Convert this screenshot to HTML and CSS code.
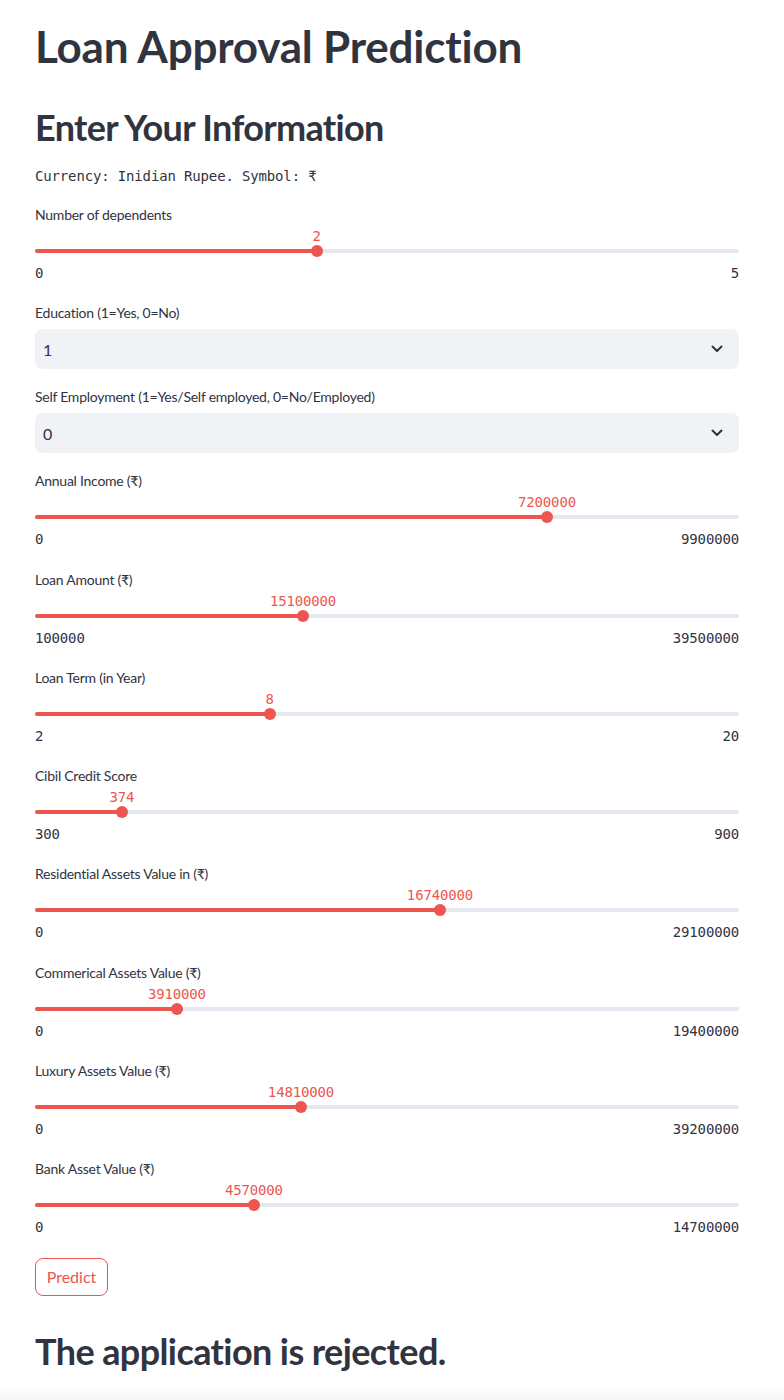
FILE: index.html
```html
<!DOCTYPE html>
<html>
<head>
<meta charset="utf-8">
<link rel="stylesheet" href="styles.css">
</head>
<body>
<div class="main">
  <h1 class="title">Loan Approval Prediction</h1>
  <h2 class="subtitle">Enter Your Information</h2>
  <div class="mono-text">Currency: Inidian Rupee. Symbol: ₹</div>

  <div class="slider-widget">
    <div class="label">Number of dependents</div>
    <div class="slider">
      <div class="track"><div class="fill" style="width:40%"></div>
        <div class="thumb" style="left:40%"><span class="val">2</span></div></div>
    </div>
    <div class="ticks"><span>0</span><span>5</span></div>
  </div>

  <div class="select-widget">
    <div class="label">Education (1=Yes, 0=No)</div>
    <div class="select"><span>1</span>
      <svg class="chev" viewBox="0 0 12 8" width="12" height="8"><path d="M1.5 1.5 L6 6 L10.5 1.5" fill="none" stroke="#31333f" stroke-width="2" stroke-linecap="round" stroke-linejoin="round"/></svg>
    </div>
  </div>

  <div class="select-widget">
    <div class="label">Self Employment (1=Yes/Self employed, 0=No/Employed)</div>
    <div class="select"><span>0</span>
      <svg class="chev" viewBox="0 0 12 8" width="12" height="8"><path d="M1.5 1.5 L6 6 L10.5 1.5" fill="none" stroke="#31333f" stroke-width="2" stroke-linecap="round" stroke-linejoin="round"/></svg>
    </div>
  </div>

  <div class="slider-widget">
    <div class="label">Annual Income (₹)</div>
    <div class="slider">
      <div class="track"><div class="fill" style="width:72.727%"></div>
        <div class="thumb" style="left:72.727%"><span class="val">7200000</span></div></div>
    </div>
    <div class="ticks"><span>0</span><span>9900000</span></div>
  </div>

  <div class="slider-widget">
    <div class="label">Loan Amount (₹)</div>
    <div class="slider">
      <div class="track"><div class="fill" style="width:38.071%"></div>
        <div class="thumb" style="left:38.071%"><span class="val">15100000</span></div></div>
    </div>
    <div class="ticks"><span>100000</span><span>39500000</span></div>
  </div>

  <div class="slider-widget">
    <div class="label">Loan Term (in Year)</div>
    <div class="slider">
      <div class="track"><div class="fill" style="width:33.333%"></div>
        <div class="thumb" style="left:33.333%"><span class="val">8</span></div></div>
    </div>
    <div class="ticks"><span>2</span><span>20</span></div>
  </div>

  <div class="slider-widget">
    <div class="label">Cibil Credit Score</div>
    <div class="slider">
      <div class="track"><div class="fill" style="width:12.333%"></div>
        <div class="thumb" style="left:12.333%"><span class="val">374</span></div></div>
    </div>
    <div class="ticks"><span>300</span><span>900</span></div>
  </div>

  <div class="slider-widget">
    <div class="label">Residential Assets Value in (₹)</div>
    <div class="slider">
      <div class="track"><div class="fill" style="width:57.526%"></div>
        <div class="thumb" style="left:57.526%"><span class="val">16740000</span></div></div>
    </div>
    <div class="ticks"><span>0</span><span>29100000</span></div>
  </div>

  <div class="slider-widget">
    <div class="label">Commerical Assets Value (₹)</div>
    <div class="slider">
      <div class="track"><div class="fill" style="width:20.155%"></div>
        <div class="thumb" style="left:20.155%"><span class="val">3910000</span></div></div>
    </div>
    <div class="ticks"><span>0</span><span>19400000</span></div>
  </div>

  <div class="slider-widget">
    <div class="label">Luxury Assets Value (₹)</div>
    <div class="slider">
      <div class="track"><div class="fill" style="width:37.781%"></div>
        <div class="thumb" style="left:37.781%"><span class="val">14810000</span></div></div>
    </div>
    <div class="ticks"><span>0</span><span>39200000</span></div>
  </div>

  <div class="slider-widget">
    <div class="label">Bank Asset Value (₹)</div>
    <div class="slider">
      <div class="track"><div class="fill" style="width:31.088%"></div>
        <div class="thumb" style="left:31.088%"><span class="val">4570000</span></div></div>
    </div>
    <div class="ticks"><span>0</span><span>14700000</span></div>
  </div>

  <button class="btn">Predict</button>

  <h2 class="result">The application is rejected.</h2>
</div>
<div class="footer"></div>
</body>
</html>
```

FILE: styles.css
```css
html, body {
  margin: 0;
  padding: 0;
  background: #ffffff;
}
body {
  font-family: "Lato", "Noto Sans", sans-serif;
  color: #31333f;
}
.main {
  width: 704px;
  padding: 0 45px 0 35px;
  display: flex;
  flex-direction: column;
}
.title {
  margin: 0;
  padding: 20px 0 0 0;
  font-size: 44px;
  line-height: 52px;
  font-weight: 700;
  letter-spacing: -0.2px;
}
.subtitle {
  margin: 0;
  padding: 33px 0 0 0;
  font-size: 36px;
  line-height: 44px;
  font-weight: 700;
  letter-spacing: -0.65px;
}
.mono-text {
  margin-top: 17px;
  font-family: "DejaVu Sans Mono", "Liberation Mono", monospace;
  font-size: 14px;
  line-height: 20px;
  letter-spacing: -0.15px;
}
.label {
  font-size: 14px;
  line-height: 20px;
  height: 20px;
  letter-spacing: -0.25px;
}
.slider-widget {
  margin-top: 16px;
  height: 82.3px;
  display: flex;
  flex-direction: column;
}
.mono-text + .slider-widget { margin-top: 19px; }
.slider {
  margin-top: 20px;
  height: 12px;
  display: flex;
  align-items: center;
}
.track {
  position: relative;
  width: 100%;
  height: 4px;
  border-radius: 2px;
  background: #e6e8ef;
}
.fill {
  height: 4px;
  border-radius: 2px;
  background: #ed5650;
}
.thumb {
  position: absolute;
  top: 50%;
  width: 12px;
  height: 12px;
  margin-left: -6px;
  margin-top: -6px;
  border-radius: 50%;
  background: #ed5650;
}
.val {
  position: absolute;
  left: 50%;
  bottom: 13px;
  transform: translateX(-50%);
  font-family: "DejaVu Sans Mono", "Liberation Mono", monospace;
  font-size: 14px;
  letter-spacing: -0.15px;
  line-height: 16px;
  color: #ed5650;
  white-space: nowrap;
}
.ticks {
  margin-top: 6px;
  display: flex;
  justify-content: space-between;
  font-family: "DejaVu Sans Mono", "Liberation Mono", monospace;
  font-size: 14px;
  letter-spacing: -0.15px;
  line-height: 20px;
}
.select-widget {
  margin-top: 16px;
  display: flex;
  flex-direction: column;
  padding-bottom: 2px;
}
.select {
  margin-top: 6px;
  height: 40px;
  border-radius: 8px;
  background: #f0f2f6;
  display: flex;
  align-items: center;
  justify-content: space-between;
  padding: 0 16px 0 8px;
  font-size: 16px;
}
.chev { display: block; }
.btn {
  margin-top: 16px;
  align-self: flex-start;
  height: 38px;
  width: 73px;
  padding: 0;
  background: #ffffff;
  border: 1px solid #ed5650;
  border-radius: 8px;
  color: #ed5650;
  font-family: "Lato", "Noto Sans", sans-serif;
  font-size: 16px;
}
.result {
  margin: 0;
  padding: 33px 0 0 0;
  font-size: 36px;
  line-height: 44px;
  font-weight: 700;
  letter-spacing: -0.6px;
}
.footer {
  margin-top: 12px;
  height: 40px;
  background: linear-gradient(#ffffff, #f8f8f8 30%);
}
```
